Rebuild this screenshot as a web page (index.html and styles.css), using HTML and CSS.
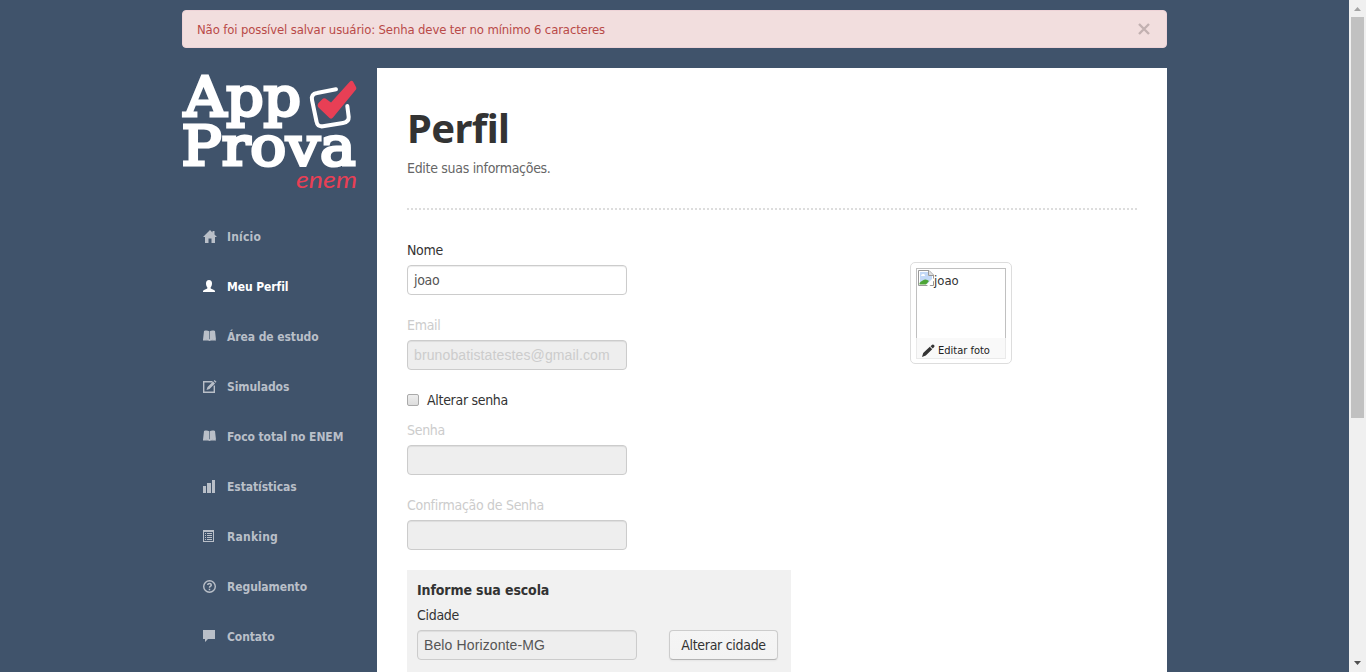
FILE: index.html
```html
<!DOCTYPE html>
<html lang="pt-BR">
<head>
<meta charset="utf-8">
<title>AppProva - Perfil</title>
<link rel="stylesheet" href="styles.css">
</head>
<body>
<div class="viewport">
  <div class="page">
    <div class="container">
      <div class="alert">
        <span class="alert-text">Não foi possível salvar usuário: Senha deve ter no mínimo 6 caracteres</span>
        <svg class="close" width="12" height="12" viewBox="0 0 12 12"><path d="M1 1L11 11M11 1L1 11"/></svg>
      </div>
      <div class="columns">
        <aside class="sidebar">
          <svg class="logo" width="176" height="130" viewBox="0 0 176 130">
            <g class="logo-word">
              <text x="2" y="48" textLength="117" lengthAdjust="spacingAndGlyphs">App</text>
              <text x="-0.5" y="97" textLength="174" lengthAdjust="spacingAndGlyphs">Prova</text>
            </g>
            <text class="logo-enem" x="114" y="120" textLength="61" lengthAdjust="spacingAndGlyphs">enem</text>
            <path class="logo-box" d="M154 21.300L135 25Q129 26 130 32L134.500 53.500Q135.500 59 141 58.300L161 55Q167 54 166.700 49L165.300 38"/>
            <path class="logo-check" d="M137 34.500Q134.500 37 136.500 39.500L147.500 50Q149.500 51.500 151 49.500L174 21.500Q175 20 173.500 18L171 13.500Q169.500 12 167.500 14L149 34.500L143.500 30.500Q141.500 29.500 140 31.500Z"/>
          </svg>
          <nav class="menu">
            <a class="item"><svg class="icon" viewBox="0 0 14 14"><path d="M7 0L9.500 2.500V1H11.500V4.500L14 7H12V13H8.500V8.500H5.500V13H2V7H0Z"/></svg><span class="wide">Início</span></a>
            <a class="item active"><svg class="icon" viewBox="0 0 14 14"><path d="M6 0C8 0 9 1.300 9 3.500C9 5.500 8.200 6.600 7.700 7.300V8.500L11 10C12 10.500 12 11 12 12H0C0 11 0 10.500 1 10L4.300 8.500V7.300C3.800 6.600 3 5.500 3 3.500C3 1.300 4 0 6 0Z"/></svg><span>Meu Perfil</span></a>
            <a class="item"><svg class="icon" viewBox="0 0 14 14"><path d="M1 1C3 .3 5 .5 6.200 1.300V9.700C4.500 9 2.500 9 0 9.700ZM12 1C10 .3 8 .5 6.800 1.300V9.700C8.500 9 10.500 9 13 9.700ZM0 9.500L6.500 9.300L13 9.500V10.500H8L6.500 11L5 10.500H0Z"/></svg><span>Área de estudo</span></a>
            <a class="item"><svg class="icon" viewBox="0 0 14 14"><path class="line" d="M9.500 1.700H.7V12.300H11.300V5.500"/><path d="M3.500 10L4.500 7L10 1.500L12 3.500L6.500 9ZM10.700 .9L11.500 0L13.500 1.800L12.700 2.800Z"/></svg><span>Simulados</span></a>
            <a class="item"><svg class="icon" viewBox="0 0 14 14"><path d="M1 1C3 .3 5 .5 6.200 1.300V9.700C4.500 9 2.500 9 0 9.700ZM12 1C10 .3 8 .5 6.800 1.300V9.700C8.500 9 10.500 9 13 9.700ZM0 9.500L6.500 9.300L13 9.500V10.500H8L6.500 11L5 10.500H0Z"/></svg><span>Foco total no ENEM</span></a>
            <a class="item"><svg class="icon" viewBox="0 0 14 14"><path d="M0 6H3V13H0ZM4 3H8V13H4ZM9 0H12V13H9Z"/></svg><span>Estatísticas</span></a>
            <a class="item"><svg class="icon" viewBox="0 0 14 14"><path fill-rule="evenodd" d="M0 0H11V12H0ZM1 2V11H10V2ZM2 3H3V4H2ZM4 3H9V4H4ZM2 5H3V6H2ZM4 5H9V6H4ZM2 7H3V8H2ZM4 7H9V8H4ZM2 9H3V10H2ZM4 9H9V10H4Z"/></svg><span class="wide">Ranking</span></a>
            <a class="item"><svg class="icon" viewBox="0 0 14 14"><circle class="line" cx="6.500" cy="6.500" r="5.800"/><path class="mark" d="M4.700 5Q4.800 3.500 6.500 3.500T8.300 5Q8.300 5.800 7.200 6.400Q6.500 6.800 6.500 7.800M6.500 8.800V10.200"/></svg><span>Regulamento</span></a>
            <a class="item"><svg class="icon" viewBox="0 0 14 14"><path d="M0 0H12V9H5L2 12V9H0Z"/></svg><span>Contato</span></a>
          </nav>
        </aside>
        <main class="content">
          <header class="heading">
            <h1>Perfil</h1>
            <p>Edite suas informações.</p>
          </header>
          <div class="profile">
            <form class="form">
              <label>Nome</label>
              <div class="field">joao</div>
              <label class="muted">Email</label>
              <div class="field disabled arial muted">brunobatistatestes@gmail.com</div>
              <div class="check"><span class="box"></span><span>Alterar senha</span></div>
              <label class="muted">Senha</label>
              <div class="field disabled"></div>
              <label class="muted">Confirmação de Senha</label>
              <div class="field disabled"></div>
              <section class="school">
                <h2>Informe sua escola</h2>
                <label>Cidade</label>
                <div class="row">
                  <div class="field disabled arial">Belo Horizonte-MG</div>
                  <div class="button">Alterar cidade</div>
                </div>
              </section>
            </form>
            <div class="photo">
              <div class="picture">
                <div class="alt">
                  <svg width="16" height="16" viewBox="0 0 16 16"><path fill="#fff" stroke="#999" d="M.5 .5H11L15.500 5V15.500H.5Z"/><path fill="#c3d9f7" d="M2 2H10V6H14V9L9 14H2Z"/><path fill="#fff" d="M3 6Q3 4 5 4Q7 3.500 7 6Z"/><path fill="#4ca536" d="M1.500 14.500V13Q7 7 11 11L8 14.500Z"/><path fill="#fff" d="M9 16L16 8V10.500L11.500 16Z"/><path fill="#ddd" stroke="#999" d="M10.500 1V5.500H15"/></svg><span>joao</span>
                </div>
                <div class="edit"><svg width="13" height="13" viewBox="0 0 13 13"><path fill="#333" d="M0 13L1.200 9L7.800 2.800L10.200 5.200L3.800 11.500ZM8.500 2.200L10.200 .7Q11 0 12 .9T12.300 2.800L10.800 4.500Z"/></svg><span>Editar foto</span></div>
              </div>
            </div>
          </div>
        </main>
      </div>
    </div>
  </div>
  <div class="scrollbar">
    <svg width="7" height="4" viewBox="0 0 7 4"><path fill="#a3a3a3" d="M0 4L3.500 0L7 4Z"/></svg>
    <div class="track"><div class="thumb"></div></div>
    <svg width="7" height="4" viewBox="0 0 7 4"><path fill="#505050" d="M0 0H7L3.500 4Z"/></svg>
  </div>
</div>
</body>
</html>
```
FILE: styles.css
```css
* { box-sizing: border-box; }
body {
  margin: 0;
  overflow: hidden;
  color: #333;
  font: 14px/20px Tahoma, "DejaVu Sans Condensed", "DejaVu Sans", sans-serif;
  font-stretch: condensed;
  letter-spacing: -0.3px;
}
h1, h2, p { margin: 0; }
svg { display: block; flex: none; }
span { white-space: nowrap; }
.viewport { display: flex; height: 672px; overflow: hidden; }
.page { flex: 1; background: #40536b; padding-top: 10px; }
.container { width: 985px; margin: 0 auto; }
.alert {
  display: flex;
  align-items: center;
  justify-content: space-between;
  height: 38px;
  margin-bottom: 20px;
  padding: 0 16px 0 14px;
  border: 1px solid #eed3d7;
  border-radius: 4px;
  background: #f2dede;
  color: #b94a48;
  font-size: 13px;
  letter-spacing: -0.14px;
}
.alert-text { padding-top: 1px; }
.close { fill: none; stroke: #c2b1b1; stroke-width: 2.4; }
.columns { display: flex; }
.sidebar { width: 195px; flex: none; }
.logo { overflow: visible; }
.logo-word {
  fill: #fff;
  stroke: #fff;
  stroke-width: 3.2;
  font: normal 54px/1 "DejaVu Serif", serif;
  letter-spacing: 0;
}
.logo-enem { fill: #e83f55; font: italic 24px/1 Lato, sans-serif; letter-spacing: 0; }
.logo-box { fill: none; stroke: #fff; stroke-width: 4; stroke-linecap: round; }
.logo-check { fill: #e83f55; }
.menu { display: flex; flex-direction: column; margin-top: 14px; padding-left: 21px; }
.item {
  display: flex;
  align-items: center;
  gap: 10px;
  height: 50px;
  color: #b9bfc8;
  font-size: 12px;
  font-weight: bold;
  letter-spacing: -0.08px;
}
.item .wide { letter-spacing: 0.2px; }
.item.active { color: #fff; }
.icon { width: 14px; height: 14px; fill: currentColor; }
.icon .line { fill: none; stroke: currentColor; stroke-width: 1.4; }
.icon .mark { fill: none; stroke: currentColor; stroke-width: 1.5; }
.content { width: 790px; height: 604px; padding: 40px 30px 0; background: #fff; }
.heading { height: 102px; border-bottom: 2px dotted #ddd; }
h1 {
  font-family: Tahoma, "Noto Sans", sans-serif;
  font-size: 40px;
  line-height: 40px;
  letter-spacing: -0.6px;
}
.heading p { margin-top: 10px; color: #666; }
.profile { display: flex; padding-top: 30px; }
.form { width: 503px; }
label { display: block; height: 20px; margin-bottom: 5px; }
.muted, .field.muted { color: #ccc; }
.field {
  width: 220px;
  height: 30px;
  margin-bottom: 20px;
  padding: 4px 6px;
  border: 1px solid #ccc;
  border-radius: 4px;
  background: #fff;
  box-shadow: inset 0 1px 1px rgba(0, 0, 0, .075);
  color: #555;
}
.disabled { background: #eee; }
.arial { font-family: "Liberation Sans", Arial, sans-serif; letter-spacing: 0.12px; }
.check { display: flex; align-items: center; gap: 8px; height: 20px; margin-bottom: 10px; }
.box {
  width: 12px;
  height: 12px;
  border: 1px solid #aaa;
  border-radius: 2px;
  background: linear-gradient(#eee, #ddd);
}
.school { width: 384px; height: 120px; padding: 10px; background: #f1f1f1; }
h2 { font-size: 14px; line-height: 20px; margin-bottom: 5px; letter-spacing: -0.12px; }
.row { display: flex; gap: 32px; }
.button {
  width: 109px;
  height: 30px;
  padding-top: 4px;
  border: 1px solid #ccc;
  border-bottom-color: #b3b3b3;
  border-radius: 4px;
  background: linear-gradient(#f5f5f5, #f3f3f3);
  box-shadow: 0 1px 2px rgba(0, 0, 0, .05);
  text-align: center;
  white-space: nowrap;
}
.photo {
  width: 102px;
  height: 102px;
  margin-top: 22px;
  padding: 5px;
  border: 1px solid #ddd;
  border-radius: 5px;
}
.picture {
  display: flex;
  flex-direction: column;
  justify-content: space-between;
  width: 90px;
  height: 91px;
  border: 1px solid #c0c0c0;
  border-bottom: 0;
}
.alt { display: flex; padding: 1px; font-size: 13px; letter-spacing: 0; }
.alt span { line-height: 22px; }
.edit {
  display: flex;
  align-items: center;
  gap: 3px;
  height: 21px;
  margin: 0 -1px;
  padding: 5px 0 0 5px;
  border: solid #eaeaea;
  border-width: 0 1px 1px;
  background: #f9f9f9;
  color: #222;
  font-size: 11px;
  letter-spacing: 0;
}
.scrollbar {
  display: flex;
  flex-direction: column;
  align-items: center;
  width: 17px;
  padding: 7px 0;
  background: #f0f0f0;
}
.track { flex: 1; padding-top: 6px; }
.thumb { width: 13px; height: 401px; background: #c1c1c1; }
```
